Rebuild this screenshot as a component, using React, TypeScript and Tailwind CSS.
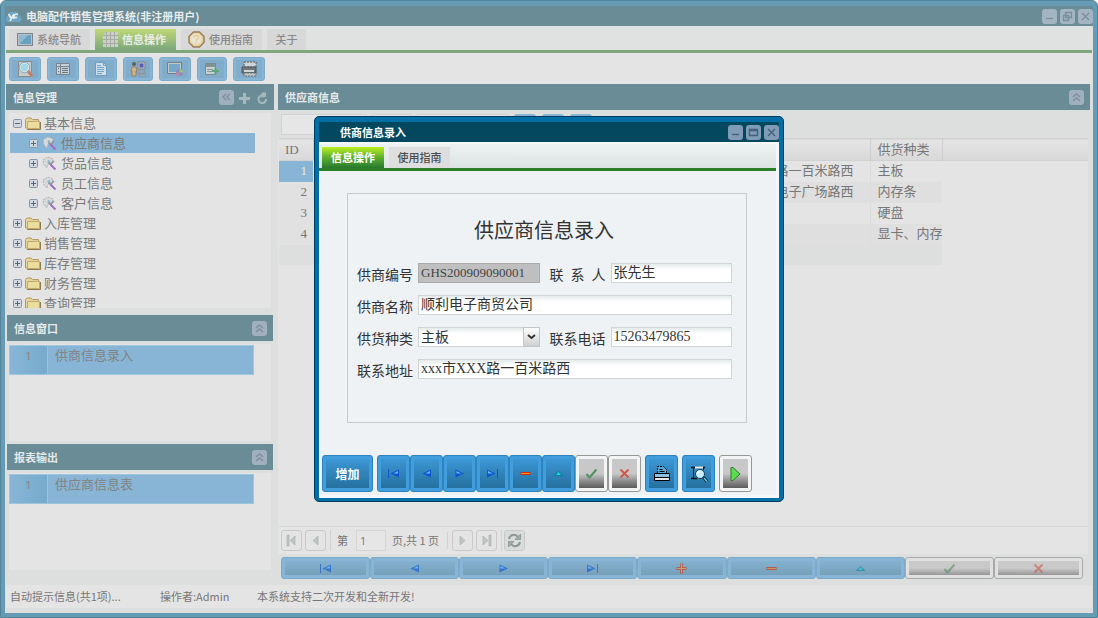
import type { ReactNode } from "react";
import clsx from "clsx";

/**
 * MAIN WINDOW + SUPPLIER ENTRY DIALOG
 * The main window uses a muted palette because it is inactive while the
 * dialog is open. The dialog itself is drawn at full strength.
 */

type Glyph = "first" | "prev" | "next" | "last" | "plus" | "minus" | "up" | "check" | "cross";

const treeItems = [
  { label: "基本信息", level: 0, open: true },
  { label: "供应商信息", level: 1, selected: true },
  { label: "货品信息", level: 1 },
  { label: "员工信息", level: 1 },
  { label: "客户信息", level: 1 },
  { label: "入库管理", level: 0 },
  { label: "销售管理", level: 0 },
  { label: "库存管理", level: 0 },
  { label: "财务管理", level: 0 },
  { label: "查询管理", level: 0 },
];

const suppliers = [
  { id: 1, address: "xxx市XXX路一百米路西", kind: "主板" },
  { id: 2, address: "xxx市电子广场路西", kind: "内存条" },
  { id: 3, address: "", kind: "硬盘" },
  { id: 4, address: "", kind: "显卡、内存" },
];

const recordActions: { glyph: Glyph; label: string; off?: boolean }[] = [
  { glyph: "first", label: "首条" },
  { glyph: "prev", label: "上一条" },
  { glyph: "next", label: "下一条" },
  { glyph: "last", label: "末条" },
  { glyph: "plus", label: "新增" },
  { glyph: "minus", label: "删除" },
  { glyph: "up", label: "编辑" },
  { glyph: "check", label: "保存", off: true },
  { glyph: "cross", label: "取消", off: true },
];

/* ---------- icons ---------- */

function RecordIcon({ glyph }: { glyph: Glyph }) {
  return (
    <svg width="13" height="11" viewBox="0 0 13 11" aria-hidden="true">
      {glyph === "first" && (
        <>
          <path d="M1.5 1v9" stroke="#0b55cf" />
          <path d="M12 1.500v8L3.500 5.500z" fill="#0b55cf" />
          <path d="M11 3v2.500H6z" fill="#6ab8ff" />
        </>
      )}
      {glyph === "prev" && (
        <>
          <path d="M11 1.500v8L2.500 5.500z" fill="#0b55cf" />
          <path d="M10 3v2.500H5z" fill="#6ab8ff" />
        </>
      )}
      {glyph === "next" && (
        <>
          <path d="M2.500 1.500v8l8.500-4z" fill="#0b55cf" />
          <path d="M3.500 3v2.500h5z" fill="#6ab8ff" />
        </>
      )}
      {glyph === "last" && (
        <>
          <path d="M11.500 1v9" stroke="#0b55cf" />
          <path d="M1 1.500v8l8.500-4z" fill="#0b55cf" />
          <path d="M2 3v2.500h5z" fill="#6ab8ff" />
        </>
      )}
      {glyph === "plus" && (
        <>
          <path d="M1.500 5.500h10M6.500 .5v10" stroke="#d8340c" strokeWidth="3" />
          <path d="M2 5.500h9M6.500 1v9" stroke="#ff9a3c" />
        </>
      )}
      {glyph === "minus" && (
        <>
          <path d="M1.500 5.500h10" stroke="#d02a08" strokeWidth="3" />
          <path d="M2 5.500h9" stroke="#ff9020" />
        </>
      )}
      {glyph === "up" && (
        <>
          <path d="M1.500 8 6.500 3l5 5z" fill="#0c8096" />
          <path d="M4 7l2.500-3L9 7z" fill="#1fd5e8" />
        </>
      )}
      {glyph === "check" && <path d="M1.500 6 4.500 9.500 11.500 1.500" fill="none" stroke="#4f9164" strokeWidth="2" />}
      {glyph === "cross" && <path d="M2.500 1.500l8 8M10.500 1.500l-8 8" fill="none" stroke="#d0584c" strokeWidth="2" />}
    </svg>
  );
}

function MonitorIcon() {
  return (
    <svg width="16" height="14" viewBox="0 0 16 14" aria-hidden="true">
      <rect x=".5" y=".5" width="15" height="12" fill="#b9c0c6" stroke="#7b8790" />
      <rect x="2" y="2" width="12" height="9" fill="#6a9fc0" />
      <path d="M2 2h9L3 11H2z" fill="#8fbad3" />
    </svg>
  );
}

function GridIcon() {
  return (
    <svg width="15" height="15" viewBox="0 0 15 15" aria-hidden="true">
      <path d="M3 0h12v15H0V3z" fill="#cbcfc8" />
      <path d="M3.500 0v15M7.500 0v15M11.500 0v15M0 3.500h15M0 7.500h15M0 11.500h15" stroke="#a6aba6" />
    </svg>
  );
}

function HelpIcon() {
  return (
    <svg width="17" height="17" viewBox="0 0 17 17" aria-hidden="true">
      <path d="M5.500 1h6L16 5.500v6L11.500 16h-6L1 11.500v-6z" fill="#e6d19a" stroke="#9c7f5e" strokeWidth="1.500" />
      <circle cx="8" cy="8" r="5.500" fill="#e9e4d4" />
      <path d="M6 6.500C6 4 10.500 4 10.500 6.500c0 1.800-2.200 1.600-2.200 3.300M8.300 11v1.300" stroke="#e0cc94" strokeWidth="1.600" fill="none" />
    </svg>
  );
}

const toolIcons: { label: string; narrow?: boolean; drawing: ReactNode }[] = [
  {
    label: "查找",
    drawing: (
      <>
        <path d="M1.500 .5h13v15h-13z" fill="#cfd0ca" stroke="#8a8a86" />
        <circle cx="7.500" cy="6.500" r="4.500" fill="#a5dcea" stroke="#e3ecef" strokeWidth="1.500" />
        <circle cx="7.500" cy="6.500" r="5.200" stroke="#6d98ad" strokeWidth=".7" />
        <path d="M11 10l4 5" stroke="#cf7b60" strokeWidth="3" />
      </>
    ),
  },
  {
    label: "列表",
    drawing: (
      <>
        <path d="M1.500 2.500h13v11h-13z" fill="#cdd3d6" stroke="#77828a" />
        <path d="M5.500 3v10M1 5.500h14" stroke="#77828a" />
        <path d="M7 7.500h6M7 9.500h6M7 11.500h6M3 7.500h1M3 10.500h1" stroke="#66747e" />
      </>
    ),
  },
  {
    label: "文档",
    drawing: (
      <>
        <path d="M2.500 1.500h8l3 3v10h-11z" fill="#d9e5ee" stroke="#6a9cc0" />
        <path d="M10.500 1.500v3h3M4 4.500h4M4 6.500h7M4 8.500h7M4 10.500h7M4 12.500h5" stroke="#72a5cc" fill="none" />
      </>
    ),
  },
  {
    label: "操作员",
    narrow: true,
    drawing: (
      <>
        <circle cx="4" cy="3" r="2" fill="#5f5347" />
        <path d="M2 6h4l1 4H6v5H2v-5H1z" fill="#dab57c" stroke="#8b6b45" strokeWidth=".7" />
        <path d="M8 1h7v7H8z" fill="#c6c9d0" stroke="#7a7d88" />
        <path d="M9.500 2.500h4v4h-4z" fill="#5252b4" />
        <path d="M8 10h7v2H8zM9 13h7v2H9z" fill="#aab2bf" stroke="#777" strokeWidth=".5" />
      </>
    ),
  },
  {
    label: "桌面",
    drawing: (
      <>
        <path d="M.5 1.500h14v11H.5z" fill="#c9cfcd" stroke="#6f7b82" />
        <path d="M2 3h11v8H2z" fill="#75a9c8" />
        <circle cx="12.500" cy="11.500" r="3.500" fill="#8b86c4" />
        <path d="M12.500 8a3.500 3.500 0 013.500 3.500h-3.500z" fill="#a9c46d" />
        <path d="M9 11.500a3.500 3.500 0 003.500 3.500v-3.500z" fill="#c983a4" />
      </>
    ),
  },
  {
    label: "导入",
    narrow: true,
    drawing: (
      <>
        <path d="M1.500 2.500h10v11h-10z" fill="#cfd6d2" stroke="#7b8988" />
        <path d="M2 3h9v3H2z" fill="#81928f" />
        <path d="M3 8.500h6M3 10.500h6" stroke="#8c9895" />
        <path d="M8 10h7M11.500 7v6" stroke="#5aa573" strokeWidth="2" />
      </>
    ),
  },
  {
    label: "打印",
    drawing: (
      <>
        <path d="M3 1h12v5H3z" fill="#d9d9d9" stroke="#555" strokeDasharray="2 1" />
        <path d="M1 6h14v6H1z" fill="#6d7275" stroke="#494f53" />
        <path d="M3 9h10v2H3z" fill="#d9d9d9" />
        <path d="M3 12h12v3H3z" fill="#c9c9c9" stroke="#666" strokeDasharray="2 1" />
      </>
    ),
  },
];

function FolderIcon() {
  return (
    <svg width="16" height="13" viewBox="0 0 16 13" aria-hidden="true">
      <path d="M.5 11V2.500L2 1h4l1.500 1.500H13.500V11z" fill="#e3d69c" stroke="#b59a63" />
      <path d="M2.500 4.500h12v7h-12z" fill="#e9dc9c" stroke="#c4a96c" />
      <path d="M2 12.500h13.500V5" stroke="#8d7b52" fill="none" />
    </svg>
  );
}

function TagIcon() {
  return (
    <svg width="15" height="15" viewBox="0 0 15 15" aria-hidden="true">
      <path d="M1 4l5-3 5 2-1 4-4 1-1 4-3-3z" fill="#d9d9d9" stroke="#b3b3b3" strokeDasharray="2 1" />
      <circle cx="7" cy="5.500" r="1.500" fill="#8ebbd5" />
      <path d="M6.500 6.500L10 10M12 5l-3 3" stroke="#8f8f9b" strokeWidth="1.500" />
      <path d="M8.500 8.500l5 5" stroke="#a06cc4" strokeWidth="2" />
    </svg>
  );
}

function Expander({ open }: { open?: boolean }) {
  return (
    <svg width="9" height="9" viewBox="0 0 9 9" className="shrink-0" aria-hidden="true">
      <rect x=".5" y=".5" width="8" height="8" rx="1" fill="#d3d7df" stroke="#8794a6" />
      <path d={open ? "M2 4.500h5" : "M2 4.500h5M4.500 2v5"} stroke="#59697c" />
    </svg>
  );
}

function CloudLogo() {
  return (
    <svg width="16" height="13" viewBox="0 0 16 13" aria-hidden="true">
      <path d="M3 12a3 3 0 01-1-6 4 4 0 016-4 4 4 0 015 4 3 3 0 01-1 6z" fill="#6fa6c5" />
      <path d="M2.500 4l2.500 4M8 4L4 11M8 9V6q0-2 4-2M8 7.500h3" stroke="#e8edef" strokeWidth="1.700" fill="none" />
    </svg>
  );
}

/* ---------- shared controls ---------- */

function WindowButtons({ dialog = false }: { dialog?: boolean }) {
  const middle = dialog ? "M3.500 4.500h8v6h-8zM3.500 5.500h8" : "M5.500 3.500h6v5h-6zM3.500 6.500h5v5h-5z";
  const paths = [
    { label: "最小化", d: "M4 9.500h7" },
    { label: dialog ? "最大化" : "还原", d: middle },
    { label: "关闭", d: "M4 4l7 7M11 4l-7 7" },
  ];
  return (
    <div className="flex gap-[3px]">
      {paths.map(({ label, d }) => (
        <button
          key={label}
          aria-label={label}
          className={clsx("size-[15px] rounded-[3px]", dialog ? "bg-[#7f9bb6]" : "bg-[#a3b5c1]")}
        >
          <svg width="15" height="15" viewBox="0 0 15 15" fill="none" stroke={dialog ? "#42617c" : "#788f9c"} strokeWidth="1.300">
            <path d={d} />
          </svg>
        </button>
      ))}
    </div>
  );
}

function CollapseButton({ side = false }: { side?: boolean }) {
  return (
    <button aria-label="折叠" className="size-[15px] rounded-[3px] bg-[#a0b0bd]">
      <svg width="15" height="15" viewBox="0 0 15 15" fill="none" stroke="#7d909f" strokeWidth="1.500">
        <path d={side ? "M7 4L4 7l3 3M11 4L8 7l3 3" : "M4 7l3.500-3L11 7M4 11l3.500-3 3.500 3"} />
      </svg>
    </button>
  );
}

function PanelHeader({ title, children }: { title: string; children: ReactNode }) {
  return (
    <div className="flex h-[26px] shrink-0 items-center justify-between bg-[#698c97] pr-[6px] pl-[7px]">
      <h2 className="pt-px text-[11px] font-bold text-[#e6e9ea]">{title}</h2>
      <div className="flex items-center gap-1">{children}</div>
    </div>
  );
}

function RecordButton({ glyph, label, off }: { glyph: Glyph; label: string; off?: boolean }) {
  return (
    <button
      aria-label={label}
      className={clsx(
        "h-[22px] flex-1 rounded-[3px] border p-[3px]",
        off ? "border-[#a8a8a8] bg-[#e0e0e0]" : "border-[#7cabc9] bg-[#88b5d5]",
      )}
    >
      <span
        className={clsx(
          "flex h-full items-center justify-center bg-gradient-to-b",
          off ? "from-[#c9c9c9] from-50% to-[#979797]" : "from-[#84b1d0] to-[#779fb9]",
        )}
      >
        <span className="opacity-60">
          <RecordIcon glyph={glyph} />
        </span>
      </span>
    </button>
  );
}

function DialogButton({ label, off, wide, children }: { label: string; off?: boolean; wide?: boolean; children: ReactNode }) {
  return (
    <button
      aria-label={label}
      className={clsx(
        "h-[37px] rounded-[3px] border p-[3px]",
        wide ? "w-[51px]" : "w-[33px]",
        off ? "border-[#979797] bg-[#f2f4f5]" : "border-[#2d83bd] bg-[#419ddb]",
      )}
    >
      <span
        className={clsx(
          "flex h-full items-center justify-center bg-gradient-to-b",
          off ? "from-[#c8c8c8] from-50% to-[#5c5c5c]" : "from-[#3c97d4] to-[#25709f]",
        )}
      >
        {children}
      </span>
    </button>
  );
}

/* ---------- left column ---------- */

function NavTree() {
  return (
    <div className="px-[3px] pt-[3px] pb-[7px]">
      <ul className="h-[195px] overflow-hidden bg-[#e4e4e4] pr-4 pl-px">
        {treeItems.map(({ label, level, open, selected }) => (
          <li
            key={label}
            className={clsx(
              "flex h-5 items-center text-[13px] text-[#7b7b7b]",
              level === 0 ? "gap-[3px] pl-[3px]" : "gap-1 pl-[19px]",
              selected && "bg-[#88b5d5]",
            )}
          >
            <Expander open={open} />
            {level === 0 ? <FolderIcon /> : <TagIcon />}
            <a href="#">{label}</a>
          </li>
        ))}
      </ul>
    </div>
  );
}

function TaskPanel({ title, item }: { title: string; item: string }) {
  return (
    <section className="mx-px mb-[3px]">
      <PanelHeader title={title}>
        <CollapseButton />
      </PanelHeader>
      <div className="px-[2px] pt-[3px]">
        <div className="h-[97px] bg-[#e4e4e4] pt-px pr-[17px]">
          <div className="flex h-[30px] border border-[#9cc4dc] bg-[#88b5d5] leading-5 text-[#838383]">
            <span className="w-[38px] border-r border-[#9cc4dc] bg-gradient-to-r from-[#88b5d5] to-[#76abcd] text-center font-['Open_Sans',sans-serif] text-[11px]">
              1
            </span>
            <a href="#" className="pl-[7px] text-[13px] leading-[18px]">
              {item}
            </a>
          </div>
        </div>
      </div>
    </section>
  );
}

/* ---------- right column ---------- */

function PagerButton({ label, d }: { label: string; d: string }) {
  return (
    <button aria-label={label} className="flex size-[21px] items-center justify-center rounded-[3px] border border-[#c8caca]">
      <svg width="13" height="13" viewBox="0 0 13 13" fill="#c0c4c4" stroke="#aeb2b2" strokeWidth=".7">
        <path d={d} />
      </svg>
    </button>
  );
}

function Pager() {
  return (
    <div className="flex h-7 items-center border-t border-[#d4d8d7] bg-[#e4e4e4] pl-[2px] text-[11px] text-[#777]">
      <div className="flex gap-[3px] border-r border-[#d0d3d2] pr-1">
        <PagerButton label="第一页" d="M2 1h2v11H2zM10 2v9L5 6.500z" />
        <PagerButton label="上一页" d="M9 2v9L4 6.500z" />
      </div>
      <label htmlFor="page" className="pl-[6px]">
        第
      </label>
      <input
        id="page"
        defaultValue="1"
        className="ml-2 h-[21px] w-[30px] border border-[#d2d6d5] bg-[#e6e6e6] px-[3px] font-['Open_Sans',sans-serif]"
      />
      <span className="border-r border-[#d0d3d2] pr-2 pl-[6px]">页,共 1 页</span>
      <div className="flex gap-[3px] border-r border-[#d0d3d2] px-1">
        <PagerButton label="下一页" d="M4 2v9l5-4.500z" />
        <PagerButton label="最后页" d="M3 2v9l5-4.500zM9 1h2v11H9z" />
      </div>
      <button aria-label="刷新" className="ml-[2px] flex size-[21px] items-center justify-center rounded-[3px] border border-[#c8caca] bg-[#d8dcdb]">
        <svg width="15" height="15" viewBox="0 0 15 15" fill="none" stroke="#8f9595" strokeWidth="2">
          <path d="M2 6a5 5 0 019-2M13 9a5 5 0 01-9 2" />
          <path d="M13.500 1v5.500H8zM1.500 14V8.500H7z" fill="#a5abab" stroke="#858b8b" strokeWidth=".7" />
        </svg>
      </button>
    </div>
  );
}

function SupplierTable() {
  return (
    <table className="w-full table-fixed border-collapse font-['Liberation_Serif','Noto_Sans_CJK_SC',serif] text-[13px] text-[#777]">
      <colgroup>
        <col className="w-[34px]" />
        <col className="w-[557px]" />
        <col className="w-[72px]" />
        <col />
      </colgroup>
      <thead>
        <tr className="h-[22px] border-y border-[#d0d2d1] bg-gradient-to-b from-[#e4e4e4] to-[#d9d9d9] text-left leading-5">
          <th className="border-r border-[#cdcfce] pl-[6px] font-normal">ID</th>
          <th className="border-r border-[#cdcfce]" />
          <th className="border-r border-[#cdcfce] pl-[7px] font-normal">供货种类</th>
          <th />
        </tr>
      </thead>
      <tbody>
        {suppliers.map(({ id, address, kind }) => (
          <tr key={id} className="h-[21px] leading-5">
            <td className={clsx("pr-[6px] text-right", id === 1 ? "bg-[#88b5d5] text-[#e8e8e8]" : "bg-[#e1e1e1]")}>{id}</td>
            <td className={clsx("border-r border-[#dadddc] pr-4 text-right", id % 2 === 0 && "bg-[#dfdfdf]")}>{address}</td>
            <td className={clsx("pl-[7px] whitespace-nowrap", id % 2 === 0 && "bg-[#dfdfdf]")}>{kind}</td>
            <td />
          </tr>
        ))}
        <tr className="h-5">
          <td colSpan={3} className="bg-[#dcdfde]" />
          <td />
        </tr>
      </tbody>
    </table>
  );
}

/* ---------- dialog ---------- */

const fieldClass =
  "h-5 min-w-0 border border-[#d0d4d5] bg-gradient-to-b from-[#e4eaeb] to-white to-30% px-[2px] font-['Liberation_Serif','Noto_Sans_CJK_SC',serif] text-[#333]";

function Field({ id, label, grow, children }: { id: string; label: string; grow?: boolean; children: ReactNode }) {
  return (
    <div className={clsx("flex h-5 gap-[5px]", grow ? "w-full" : "flex-1")}>
      <label htmlFor={id} className="w-14 shrink-0 pt-px leading-5 [text-align-last:justify]">
        {label}
      </label>
      {children}
    </div>
  );
}

function SupplierDialog() {
  return (
    <div className="fixed inset-0 flex items-center justify-center">
      <div
        role="dialog"
        aria-label="供商信息录入"
        className="w-[470px] rounded-[5px] border border-[#003d5c] bg-[#006fa5] px-1 pt-[5px] pb-[3px]"
      >
        <div className="flex h-5 items-center justify-between bg-[#04485f] pl-[21px]">
          <h2 className="text-[11px] font-bold text-white">供商信息录入</h2>
          <WindowButtons dialog />
        </div>
        <div className="border-t-2 border-r-[3px] border-b-[3px] border-[#f4f8fa] bg-[#eef2f4]">
          <nav className="flex h-[27px] items-end gap-[5px] border-b-[3px] border-[#2b7f2b] bg-gradient-to-b from-[#eef2f3] to-[#dde3e2] pl-[3px] text-[11px]">
            <button className="h-[21px] w-[62px] bg-gradient-to-b from-[#b9f01a] via-[#5eae30] to-[#257a2c] font-bold text-white">信息操作</button>
            <button className="h-[21px] w-[61px] bg-[#dedede] font-medium text-[#4c4c4c]">使用指南</button>
          </nav>

          <form className="mt-[22px] mr-[29px] ml-7 h-[230px] border border-[#c5cbce] px-[9px] pt-5 text-sm text-[#333]">
            <h1 className="pr-[6px] pb-[17px] text-center text-xl leading-8">供应商信息录入</h1>
            <div className="flex flex-col gap-3 pr-[5px]">
              <div className="flex gap-[10px]">
                <Field id="code" label="供商编号">
                  <input id="code" readOnly defaultValue="GHS200909090001" className="h-5 w-full min-w-0 border border-[#aaa] bg-[#bfbfbf] px-[2px] font-['Liberation_Serif',serif] text-[13px] text-[#444]" />
                </Field>
                <Field id="contact" label="联 系 人">
                  <input id="contact" defaultValue="张先生" className={clsx(fieldClass, "w-full")} />
                </Field>
              </div>
              <Field id="name" label="供商名称" grow>
                <input id="name" defaultValue="顺利电子商贸公司" className={clsx(fieldClass, "flex-1")} />
              </Field>
              <div className="flex gap-[10px]">
                <Field id="kind" label="供货种类">
                  <div className="relative w-full">
                    <select id="kind" className={clsx(fieldClass, "block w-full appearance-none")}>
                      <option>主板</option>
                    </select>
                    <span className="pointer-events-none absolute top-0 right-0 flex h-5 w-[17px] items-center justify-center border border-[#c2c6c8] bg-gradient-to-b from-white to-[#cfcfcf]">
                      <svg width="9" height="6" viewBox="0 0 9 6" fill="none" stroke="#333" strokeWidth="2">
                        <path d="M1 1l3.500 3L8 1" />
                      </svg>
                    </span>
                  </div>
                </Field>
                <Field id="phone" label="联系电话">
                  <input id="phone" defaultValue="15263479865" className={clsx(fieldClass, "w-full")} />
                </Field>
              </div>
              <Field id="address" label="联系地址" grow>
                <input id="address" defaultValue="xxx市XXX路一百米路西" className={clsx(fieldClass, "flex-1")} />
              </Field>
            </div>
          </form>

          <div className="flex gap-1 pt-8 pb-[3px] pl-[3px]">
            <DialogButton label="增加" wide>
              <span className="text-xs font-bold text-white">增加</span>
            </DialogButton>
            <div className="flex">
              {recordActions
                .filter(({ glyph }) => glyph !== "plus")
                .map(({ glyph, label, off }) => (
                  <DialogButton key={glyph} label={label} off={off}>
                    <RecordIcon glyph={glyph} />
                  </DialogButton>
                ))}
            </div>
            <DialogButton label="打印">
              <svg width="18" height="18" viewBox="0 0 18 18" aria-hidden="true">
                <path d="M4.500 8V1.500h6l3 3V8" fill="#5aa9dd" stroke="#000" strokeDasharray="2 1" />
                <path d="M6.500 4.500h3M6.500 6.500h5" stroke="#000" />
                <path d="M1.500 8.500h15v4h-15z" fill="#8fc0e2" stroke="#000" />
                <path d="M1.500 12.500h15v3h-15z" fill="#d4dadc" stroke="#000" />
                <path d="M3 14h12" stroke="#f4f6f6" />
              </svg>
            </DialogButton>
            <DialogButton label="预览">
              <svg width="18" height="18" viewBox="0 0 18 18" aria-hidden="true">
                <path d="M1 2.500h14M1 13.500h6" stroke="#111" strokeWidth="1.500" />
                <path d="M3.500 2v11M13.500 2v3" stroke="#111" />
                <path d="M5 2.500h8" stroke="#e8eef0" strokeWidth="2" />
                <circle cx="10" cy="9" r="4.500" fill="#c8ecfb" stroke="#153b55" />
                <path d="M7.500 9q0-2.500 2.500-2.500" stroke="#fff" strokeWidth="1.500" fill="none" />
                <path d="M13.500 12.500l3.500 4" stroke="#111" strokeWidth="3" />
                <path d="M14 13l3 3.500" stroke="#63cdf0" strokeWidth="1.500" />
              </svg>
            </DialogButton>
            <DialogButton label="执行" off>
              <svg width="11" height="16" viewBox="0 0 11 16" aria-hidden="true">
                <path d="M1 1.500v13h2l7-6.500-7-6.500z" fill="#58de4e" stroke="#3c7437" />
              </svg>
            </DialogButton>
          </div>
        </div>
      </div>
    </div>
  );
}

/* ---------- page ---------- */

export default function App() {
  return (
    <div className="flex min-h-screen flex-col rounded-t-md border border-[#55849a] bg-[#669bb5] px-1 pb-1 font-['Noto_Sans_CJK_SC','Open_Sans',sans-serif]">
      <header className="mt-[5px] flex h-5 items-center justify-between bg-[#698c97] pl-px">
        <div className="flex items-center gap-1">
          <CloudLogo />
          <h1 className="text-[11px] font-bold text-[#e8ebec]">电脑配件销售管理系统(非注册用户)</h1>
        </div>
        <WindowButtons />
      </header>

      <div className="flex flex-1 flex-col bg-[#dcdfde] px-px">
        <nav className="flex h-[27px] items-end gap-[5px] border-b-[3px] border-[#7fa77c] bg-[#dfe2e1] pl-[3px] text-[11px] font-medium text-[#898989]">
          <button className="flex h-[21px] w-[81px] items-center gap-1 bg-[#d8d8d8] pl-2">
            <MonitorIcon />
            系统导航
          </button>
          <button className="flex h-[21px] w-[81px] items-center gap-1 bg-gradient-to-b from-[#bfd873] to-[#7ca77c] pl-2 font-bold text-[#e8ebe8]">
            <GridIcon />
            信息操作
          </button>
          <button className="flex h-[21px] w-[81px] items-center gap-1 bg-[#d8d8d8] pl-[7px]">
            <HelpIcon />
            使用指南
          </button>
          <button className="h-[21px] w-[39px] bg-[#d8d8d8]">关于</button>
        </nav>

        <div className="flex h-[31px] items-center gap-[6px] bg-[#e4e4e4] pl-[3px]">
          {toolIcons.map(({ label, narrow, drawing }) => (
            <button
              key={label}
              aria-label={label}
              className={clsx("h-6 rounded-[3px] border border-[#7daccb] bg-[#88b5d5] p-[2px]", narrow ? "w-[30px]" : "w-8")}
            >
              <span className="flex h-full items-center justify-center bg-[#81adcb]">
                <svg width="16" height="16" viewBox="0 0 16 16" fill="none" opacity=".9" aria-hidden="true">
                  {drawing}
                </svg>
              </span>
            </button>
          ))}
        </div>

        <main className="flex flex-1 gap-1 pr-[2px]">
          <aside className="w-[268px] shrink-0">
            <PanelHeader title="信息管理">
              <CollapseButton side />
              <button aria-label="添加">
                <svg width="13" height="13" viewBox="0 0 13 13" stroke="#a6b9bd" strokeWidth="3">
                  <path d="M1 7.500h11M6.500 2v11" />
                </svg>
              </button>
              <button aria-label="刷新">
                <svg width="13" height="13" viewBox="0 0 13 13" fill="none" stroke="#a6b9bd" strokeWidth="2">
                  <path d="M7 4.500a3.800 3.800 0 104 3.500" />
                  <path d="M6.500 1.500v5l4.500-.5V1.500z" fill="#a6b9bd" stroke="none" />
                </svg>
              </button>
            </PanelHeader>
            <NavTree />
            <TaskPanel title="信息窗口" item="供商信息录入" />
            <TaskPanel title="报表输出" item="供应商信息表" />
          </aside>

          <section className="flex min-w-0 flex-1 flex-col">
            <PanelHeader title="供应商信息">
              <CollapseButton />
            </PanelHeader>
            <div className="flex h-7 items-center gap-[6px] pl-[3px]">
              <input aria-label="查询" className="h-[21px] w-[85px] border border-[#d0d3d2] bg-[#e6e6e6]" />
              <select aria-label="条件" className="h-[21px] w-[39px] appearance-none border border-[#d0d3d2] bg-[#e6e6e6]" />
              <select aria-label="字段" className="h-[21px] w-[91px] appearance-none border border-[#d0d3d2] bg-[#e6e6e6]" />
              <button aria-label="筛选" className="h-[21px] w-[22px] rounded-[3px] bg-[#88b5d5]" />
              <button aria-label="清除" className="h-[21px] w-[22px] rounded-[3px] bg-[#88b5d5]" />
              <button aria-label="导出" className="h-[21px] w-[22px] rounded-[3px] bg-[#88b5d5]" />
            </div>
            <div className="mr-[2px] flex flex-1 flex-col justify-between bg-[#e4e4e4] pl-px">
              <SupplierTable />
              <Pager />
            </div>
            <div className="flex pt-[3px] pr-[7px] pb-[6px] pl-[3px]">
              {recordActions.map((action) => (
                <RecordButton key={action.glyph} {...action} />
              ))}
            </div>
          </section>
        </main>

        <footer className="mb-[5px] flex h-[23px] items-center bg-[#e4e4e4] pl-1 text-[11px] text-[#777]">
          <span className="w-[150px]">自动提示信息(共1项)...</span>
          <span className="w-[97px]">操作者:Admin</span>
          <span>本系统支持二次开发和全新开发!</span>
        </footer>
      </div>

      <SupplierDialog />
    </div>
  );
}
